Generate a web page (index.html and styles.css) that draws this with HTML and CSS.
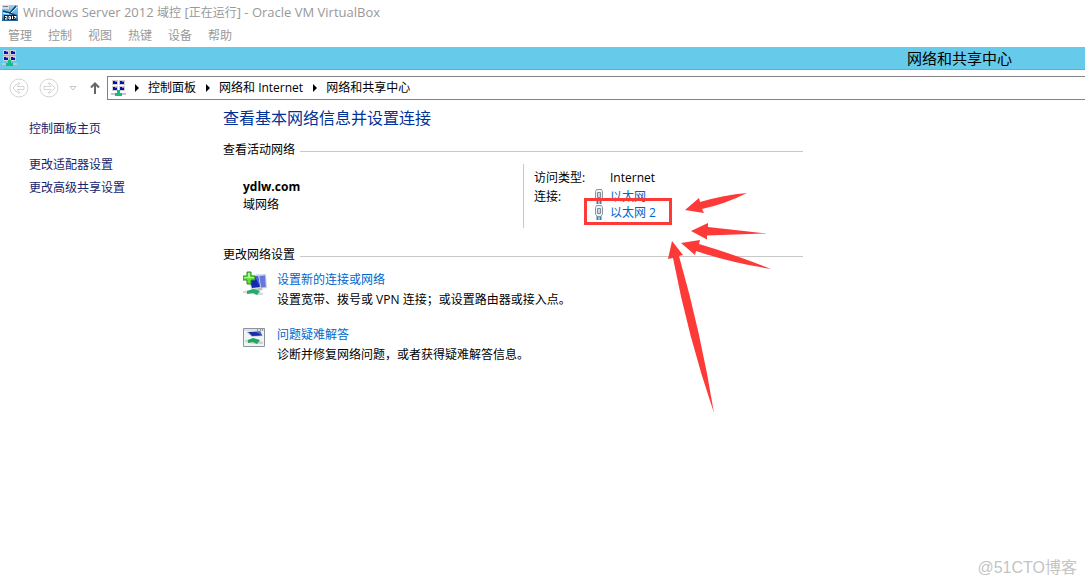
FILE: index.html
```html
<!DOCTYPE html>
<html lang="zh-CN">
<head>
<meta charset="utf-8">
<title>网络和共享中心</title>
<link rel="stylesheet" href="styles.css">
</head>
<body>
<svg class="defs" aria-hidden="true">
  <defs>
    <symbol id="network" viewBox="0 0 16 16">
      <path fill="#d3cfd0" d="M1 0h6v5H1zM8 0h6v5H8zM1 6h6v5H1zM8 6h6v5H8z"/>
      <path fill="#0a10b8" d="M2 1h4v3H2zM9 1h4v3H9zM2 7h4v3H2zM9 7h4v3H9z"/>
      <path fill="#7b88ee" d="M4 1h2v1H4zM11 1h2v1h-2zM4 7h2v1H4zM11 7h2v1h-2z"/>
      <path fill="#c3c8cc" d="M0 13h15v2H0z"/>
      <path fill="#12bd80" d="M6 10h3v3h2v3H4v-3h2z"/>
    </symbol>
    <symbol id="plug" viewBox="0 0 10 16">
      <path d="M3.500 10v5M6.500 10v5" stroke="#2787ad" stroke-width="2"/>
      <path d="M2.500 .5h5l1 2v7l-2 2h-3l-2-2v-7z" fill="#eef1f5" stroke="#8995a5"/>
      <path d="M3.500 3.500h3v5h-3z" fill="#fff" stroke="#7c8999"/>
      <path d="M5 4v4" stroke="#a5b0bc"/>
    </symbol>
  </defs>
</svg>

<header class="titlebar">
  <svg class="app-icon" viewBox="0 0 16 16" aria-hidden="true">
    <defs><linearGradient id="sky" x2="0" y2="1"><stop stop-color="#9fd0ee"/><stop offset=".6" stop-color="#55aee6"/><stop offset="1" stop-color="#1d5c8c"/></linearGradient></defs>
    <path fill="url(#sky)" d="M0 0h16v16H0z"/>
    <path fill="#d7dde1" d="M0 0h7v4H0z"/>
    <path d="M1 1.500h5" stroke="#6d7f8a"/>
    <path d="M14 1 8 8l7 3M8 8 1 6" fill="none" stroke="#173e5e" stroke-width="1.500"/>
    <path d="M15 2 9 8M1 8l6 1" stroke="#e8f5fb"/>
    <path fill="#082136" d="M2 10h12v5H2z"/>
    <path d="M3 11.500h2v1L3 14h2.500M7 11.500h1.500V14H7zM10.500 11v3M12 11.500h2L12.500 14" fill="none" stroke="#fff"/>
  </svg>
  <span>Windows Server 2012 <span class="vm-name">域控</span> [<span class="vm-name">正在运行</span>] - Oracle VM VirtualBox</span>
</header>

<nav class="menubar" aria-label="虚拟机菜单">
  <button>管理</button><button>控制</button><button>视图</button><button>热键</button><button>设备</button><button>帮助</button>
</nav>

<div class="caption">
  <svg class="icon16" aria-hidden="true"><use href="#network"/></svg>
  <span class="caption-text">网络和共享中心</span>
</div>

<div class="toolbar">
  <button class="round" aria-label="后退"><svg width="20" height="20" viewBox="0 0 20 20"><circle cx="10" cy="10" r="9"/><path d="M4 10l5-5h2L8 8.500h7v3H8l3 3.500H9z"/></svg></button>
  <button class="round" aria-label="前进"><svg width="20" height="20" viewBox="0 0 20 20"><circle cx="10" cy="10" r="9"/><path d="M16 10l-5-5H9l3 3.500H5v3h7L9 15h2z"/></svg></button>
  <button class="recent" aria-label="最近位置"><svg width="8" height="5" viewBox="0 0 8 5"><path d="M1 .5h6L4 4z"/></svg></button>
  <button class="up" aria-label="向上"><svg width="10" height="12" viewBox="0 0 10 12"><path d="M5 12V1.500M1 5.500l4-4 4 4"/></svg></button>
  <nav class="address" aria-label="地址">
    <svg class="icon16" aria-hidden="true"><use href="#network"/></svg>
    <svg class="chevron" viewBox="0 0 4 8"><path d="M0 0l4 4-4 4z"/></svg>
    <a href="#">控制面板</a>
    <svg class="chevron" viewBox="0 0 4 8"><path d="M0 0l4 4-4 4z"/></svg>
    <a href="#">网络和 Internet</a>
    <svg class="chevron" viewBox="0 0 4 8"><path d="M0 0l4 4-4 4z"/></svg>
    <a href="#">网络和共享中心</a>
  </nav>
</div>

<div class="layout">
  <nav class="sidebar" aria-label="任务">
    <a class="home" href="#">控制面板主页</a>
    <a href="#">更改适配器设置</a>
    <a href="#">更改高级共享设置</a>
  </nav>

  <main class="main">
    <h1>查看基本网络信息并设置连接</h1>

    <h2>查看活动网络</h2>
    <section class="active">
      <div class="net">
        <strong>ydlw.com</strong>
        <span>域网络</span>
      </div>
      <dl class="details">
        <dt>访问类型:</dt><dd class="type">Internet</dd>
        <dt>连接:</dt>
        <dd class="links">
          <a href="#"><svg class="plug" aria-hidden="true"><use href="#plug"/></svg>以太网</a>
          <a href="#"><svg class="plug" aria-hidden="true"><use href="#plug"/></svg>以太网 2</a>
        </dd>
      </dl>
    </section>

    <h2>更改网络设置</h2>
    <section class="tasks">
      <div class="task">
        <svg class="task-icon" viewBox="0 0 24 24" aria-hidden="true">
          <path d="M11 4l12-1 1 14-9 1z" fill="#c6cfde"/>
          <path d="M16 5l6-.5.8 11.500-5 .5z" fill="#6478dc"/>
          <path d="M5 5l11-2 2 14-10 1z" fill="#c9d3e6"/>
          <path d="M6 6l9-1 2 11-8 1z" fill="#1527b4"/>
          <path d="M12 5.500l3-.5 2 11z" fill="#4d65dd"/>
          <path d="M10 18l8-1 2 2-8 1z" fill="#b5bbc4"/>
          <path d="M0 20l8-1 12 3v2h-5L0 22z" fill="#d5d9dc"/>
          <path d="M4 20l6-2 7 2-3 4-4-2-6 1z" fill="#23ad63"/>
          <path d="M4 1h4v4h4v4H8v4H4V9H0V5h4z" fill="#68dc42" stroke="#278f20"/>
          <path d="M5 2h2v4h4v1H1V6h4z" fill="#b5f393"/>
        </svg>
        <div>
          <a href="#">设置新的连接或网络</a>
          <p>设置宽带、拨号或 VPN 连接；或设置路由器或接入点。</p>
        </div>
      </div>
      <div class="task">
        <svg class="task-icon" viewBox="0 0 24 24" aria-hidden="true">
          <path d="M.5 2.500h21v18H.5z" fill="#f1f3f5" stroke="#8d949b"/>
          <path d="M1 3h20v2H1z" fill="#dce1e7"/>
          <path d="M14 4h1M17 4h1M19 4h1" stroke="#49535e"/>
          <path d="M3 6l15-1 2 5-11 1z" fill="#c5cedb"/>
          <path d="M5 6l12-.5 2 4-10 .5z" fill="#1930a9"/>
          <path d="M13 6l4-.5 2 4z" fill="#5268cc"/>
          <path d="M2 14l9-1 9 3v2H11l-9-2z" fill="#cdd3d7"/>
          <path d="M5 14l5-2 7 2-3 4-4-2-5 1z" fill="#21a75d"/>
        </svg>
        <div>
          <a href="#">问题疑难解答</a>
          <p>诊断并修复网络问题，或者获得疑难解答信息。</p>
        </div>
      </div>
    </section>

    <svg class="marks" viewBox="583 190 190 226" aria-hidden="true">
      <path d="M585.500 199.500h85v24h-85z" fill="none" stroke="#fd3a38" stroke-width="3"/>
      <g fill="#fd3a38">
        <path d="M685 210l14-12 1 4q24-7 47-9-22 11-45 16l2 4z"/>
        <path d="M691 231l17-8v4l59 6.500-60 2v4z"/>
        <path d="M681 243l19-3-1 4q37 11 72 25-39-6-75-18l-1 4z"/>
        <path d="M672 241l11 14-4 1q22 77 35 157-26-76-41-155l-5 1z"/>
      </g>
    </svg>
  </main>
</div>

<footer class="credit">@51CTO博客</footer>
</body>
</html>
```
FILE: styles.css
```css
* { box-sizing: border-box; }
body {
  margin: 0;
  min-height: 100vh;
  display: flex;
  flex-direction: column;
  background: #fff;
  color: #000;
  font: 12px/18px "Open Sans", "Noto Sans CJK SC", sans-serif;
}
h1, h2, p, dl, dd { margin: 0; }
a { color: inherit; text-decoration: none; }
button {
  padding: 0;
  border: 0;
  background: none;
  color: inherit;
  font: inherit;
}
svg { display: block; flex: none; }
.defs { position: absolute; width: 0; height: 0; }
.icon16 { width: 16px; height: 16px; }

.titlebar {
  display: flex;
  align-items: center;
  gap: 5px;
  height: 25px;
  padding-left: 2px;
  color: #999;
  font-size: 13px;
}
.vm-name { font-size: 12px; }
.app-icon { width: 16px; height: 16px; }
.menubar {
  display: flex;
  gap: 16px;
  height: 22px;
  padding: 2px 8px;
  color: #999;
}
.caption {
  display: flex;
  align-items: center;
  justify-content: space-between;
  height: 23px;
  margin-right: 1px;
  padding: 0 73px 0 2px;
  background: #66caea;
  border-bottom: 1px solid #62afc9;
}
.caption-text { font-size: 15px; line-height: 22px; }

.toolbar {
  display: flex;
  align-items: center;
  height: 36px;
  padding: 0 1px 0 9px;
}
.round { margin-right: 10px; }
.round svg { fill: none; stroke: #d4d4d4; }
.recent { margin-right: 13px; }
.recent svg { fill: none; stroke: #c4c4c4; }
.up { margin-right: 7px; }
.up svg { fill: none; stroke: #666; stroke-width: 2; }
.address {
  flex: 1;
  display: flex;
  align-items: center;
  height: 24px;
  padding-left: 3px;
  border: 1px solid #828282;
  border-right: 0;
}
.chevron { width: 4px; height: 8px; margin: 0 9px 0 8px; }
.address a + .chevron { margin-left: 10px; }

.layout {
  display: flex;
  align-items: flex-start;
  flex: 1;
}
.sidebar {
  flex: 0 0 223px;
  display: flex;
  flex-direction: column;
  gap: 5px;
  padding: 14px 0 0 29px;
  color: #15246e;
}
.home { margin-bottom: 13px; }
.main {
  position: relative;
  flex: 0 1 580px;
}
h1 {
  font-size: 16px;
  font-weight: 400;
  line-height: 24px;
  color: #003399;
}
h2 {
  display: flex;
  align-items: center;
  gap: 5px;
  font-size: 12px;
  font-weight: 400;
}
h2::after {
  content: "";
  flex: 1;
  height: 1px;
  margin-top: 2px;
  background: #c8c8c8;
}
h1 + h2 { margin-top: 11px; }
.active {
  display: flex;
  margin: 5px 0 18px;
}
.net {
  flex: 0 0 300px;
  display: flex;
  flex-direction: column;
  padding: 14px 0 0 20px;
}
.details {
  display: grid;
  grid-template-columns: 60px auto;
  row-gap: 1px;
  align-content: start;
  height: 64px;
  padding: 5px 0 0 10px;
  border-left: 1px solid #c8c8c8;
}
.type { padding-left: 16px; }
.links {
  display: flex;
  flex-direction: column;
  padding-top: 1px;
  line-height: 16px;
  color: #0066cc;
}
.links a { display: flex; gap: 6px; }
.plug { width: 10px; height: 16px; }
.tasks {
  display: flex;
  flex-direction: column;
  gap: 17px;
  padding: 7px 0 0 20px;
}
.task { display: flex; gap: 10px; }
.task-icon { width: 24px; height: 24px; }
.task a { color: #0066cc; }
.task p { margin-top: 2px; }
.marks {
  position: absolute;
  top: 84px;
  left: 360px;
  width: 190px;
  height: 226px;
}
.credit {
  padding: 0 9px 6px 0;
  color: #c4c4c4;
  font: 16px/24px "Liberation Sans", "Noto Sans CJK SC", sans-serif;
  text-align: right;
}
```
